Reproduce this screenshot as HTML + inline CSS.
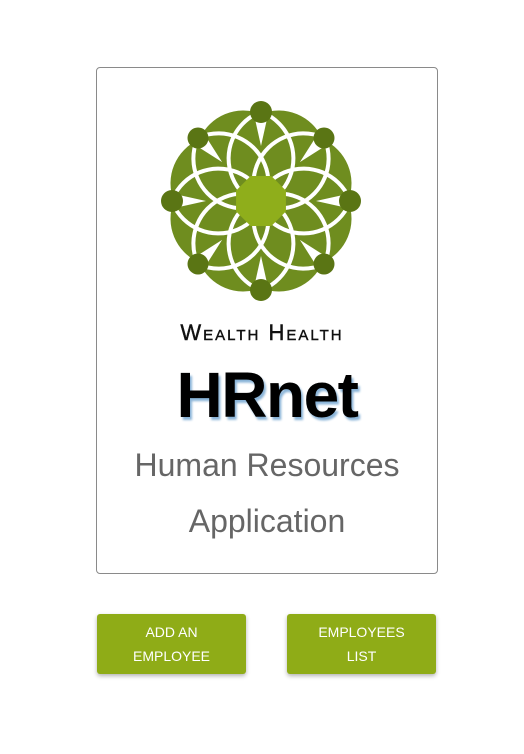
<!DOCTYPE html>
<html><head><style>
body{margin:0;width:524px;height:754px;background:#fff;font-family:"Liberation Sans",sans-serif;position:relative}
.card{position:absolute;left:96px;top:67px;width:340px;height:505px;border:1px solid #8a8a8a;border-radius:4px}
.wh{position:absolute;top:320px;left:0;width:524px;text-align:center;font-size:22px;letter-spacing:2px;color:#111;font-variant:small-caps;-webkit-text-stroke:0.4px #111}
.hr{position:absolute;top:358px;left:0;width:534px;text-align:center;font-size:64px;font-weight:bold;color:#000;letter-spacing:-1.5px;text-shadow:2px 3px 2px #8ab4d8}
.t{position:absolute;left:0;width:534px;text-align:center;font-size:32px;color:#666}
.btn{position:absolute;top:614px;width:149px;height:60px;background:#8fac17;color:#fff;font-size:14px;text-align:center;line-height:24px;border-radius:3px;box-shadow:0 2px 4px rgba(0,0,0,.3);display:flex;align-items:center;justify-content:center}
</style></head><body>
<div class="card"></div>
<svg style="position:absolute;left:0;top:0" width="524" height="754">
<defs>
<g id="c"><circle r="50" cx="46" cy="0"/></g>
<polygon id="w" points="55,0 100,-10 100,10"/>
</defs>
<g transform="translate(261,201)">
<g fill="#6f8d1f">
<use href="#c" transform="rotate(22.5)"/><use href="#c" transform="rotate(67.5)"/>
<use href="#c" transform="rotate(112.5)"/><use href="#c" transform="rotate(157.5)"/>
<use href="#c" transform="rotate(202.5)"/><use href="#c" transform="rotate(247.5)"/>
<use href="#c" transform="rotate(292.5)"/><use href="#c" transform="rotate(337.5)"/>
</g>
<g fill="none" stroke="#fff" stroke-width="4">
<use href="#c" transform="rotate(22.5)"/><use href="#c" transform="rotate(67.5)"/>
<use href="#c" transform="rotate(112.5)"/><use href="#c" transform="rotate(157.5)"/>
<use href="#c" transform="rotate(202.5)"/><use href="#c" transform="rotate(247.5)"/>
<use href="#c" transform="rotate(292.5)"/><use href="#c" transform="rotate(337.5)"/>
</g>
<g fill="#fff">
<use href="#w"/><use href="#w" transform="rotate(45)"/><use href="#w" transform="rotate(90)"/><use href="#w" transform="rotate(135)"/>
<use href="#w" transform="rotate(180)"/><use href="#w" transform="rotate(225)"/><use href="#w" transform="rotate(270)"/><use href="#w" transform="rotate(315)"/>
</g>
<polygon fill="#8fae1b" points="27,0 19.1,19.1 0,27 -19.1,19.1 -27,0 -19.1,-19.1 0,-27 19.1,-19.1" transform="rotate(22.5)"/>
<g fill="#5a7514">
<circle cx="0" cy="-89" r="11"/><circle cx="0" cy="89" r="11"/><circle cx="89" cy="0" r="11"/><circle cx="-89" cy="0" r="11"/>
<circle cx="63" cy="-63" r="10.5"/><circle cx="-63" cy="-63" r="10.5"/><circle cx="63" cy="63" r="10.5"/><circle cx="-63" cy="63" r="10.5"/>
</g>
</g>
</svg>
<div class="wh">Wealth Health</div>
<div class="hr">HRnet</div>
<div class="t" style="top:447px">Human Resources</div>
<div class="t" style="top:503px">Application</div>
<div class="btn" style="left:97px">ADD AN<br>EMPLOYEE</div>
<div class="btn" style="left:287px">EMPLOYEES<br>LIST</div>
</body></html>
